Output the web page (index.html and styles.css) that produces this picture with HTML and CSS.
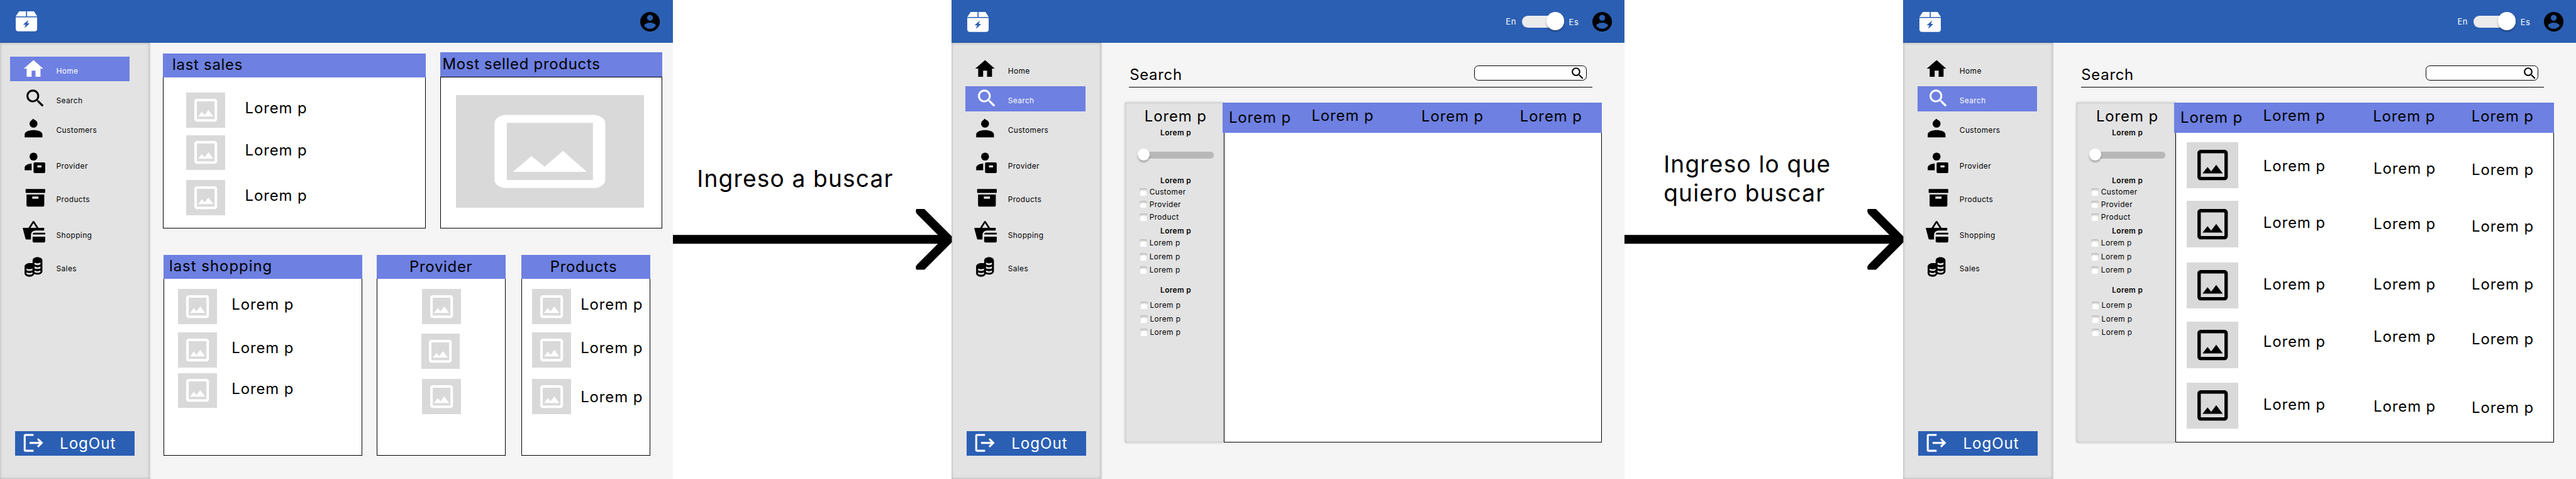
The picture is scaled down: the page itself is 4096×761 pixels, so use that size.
FILE: index.html
```html
<!DOCTYPE html>
<html lang="es">
<head>
<meta charset="utf-8">
<title>Flujo de búsqueda</title>
<link rel="stylesheet" href="styles.css">
</head>
<body>
<svg class="sprite" aria-hidden="true">
  <symbol id="logo" viewBox="34 24 46 43">
    <path d="M41.3 24H56v10.7H34zM58.3 24H73l7 10.7H58.3z"/>
    <path fill-rule="evenodd" d="M34 36.7h46V61q0 5.700-6 5.700H40q-6 0-6-5.700zM60 43.400l-9.500 8.200q-.6 1 .6 1h4.200l-2.300 6.200 1 .3 9-8.600q.6-1-.6-1h-4l2.600-6z"/>
  </symbol>
  <symbol id="user" viewBox="2 2 20 20"><path d="M12 2C6.480 2 2 6.480 2 12s4.480 10 10 10 10-4.480 10-10S17.520 2 12 2zm0 3c1.660 0 3 1.340 3 3s-1.340 3-3 3-3-1.340-3-3 1.340-3 3-3zm0 14.200c-2.500 0-4.710-1.280-6-3.220.03-1.990 4-3.080 6-3.080 1.990 0 5.970 1.090 6 3.080-1.290 1.940-3.500 3.220-6 3.220z"/></symbol>
  <symbol id="picture" viewBox="0 0 24 24"><path d="M19 5v14H5V5h14m0-2H5c-1.100 0-2 .9-2 2v14c0 1.100.9 2 2 2h14c1.100 0 2-.9 2-2V5c0-1.100-.9-2-2-2zm-4.860 8.860l-3 3.870L9 13.140 6 17h12l-3.860-5.140z"/></symbol>
  <symbol id="picture-wide" viewBox="0 0 24 24" preserveAspectRatio="none"><path d="M19 5v14H5V5h14m0-2H5c-1.100 0-2 .9-2 2v14c0 1.100.9 2 2 2h14c1.100 0 2-.9 2-2V5c0-1.100-.9-2-2-2zm-4.860 8.860l-3 3.870L9 13.140 6 17h12l-3.860-5.140z"/></symbol>
  <symbol id="lens" viewBox="0 0 24 24"><path d="M15.500 14h-.79l-.28-.27C15.410 12.590 16 11.110 16 9.500 16 5.910 13.090 3 9.500 3S3 5.910 3 9.500 5.910 16 9.500 16c1.610 0 3.090-.59 4.230-1.570l.27.28v.79l5 4.990L20.490 19l-4.990-5zm-6 0C7.010 14 5 11.990 5 9.500S7.010 5 9.500 5 14 7.010 14 9.500 11.990 14 9.500 14z"/></symbol>
  <symbol id="n-home" viewBox="46 121 54 53"><path d="M72 128.300 51 146.700h6.300V164h10.600v-13h8.400v13h10.600v-17.300h5.800z"/></symbol>
  <symbol id="n-search" viewBox="46 185 54 53"><path transform="translate(50.600 185.800) scale(2.100)" d="M15.500 14h-.79l-.28-.27C15.410 12.590 16 11.110 16 9.500 16 5.910 13.090 3 9.500 3S3 5.910 3 9.500 5.910 16 9.500 16c1.610 0 3.090-.59 4.230-1.570l.27.28v.79l5 4.990L20.490 19l-4.990-5zm-6 0C7.010 14 5 11.990 5 9.500S7.010 5 9.500 5 14 7.010 14 9.500 11.990 14 9.500 14z"/></symbol>
  <symbol id="n-customers" viewBox="46 248 54 53"><circle cx="72" cy="264.800" r="8.500"/><path d="M67 258.500 71.500 254l4 4.500zM53 294v-6c0-6 9-9.200 19-9.200s19 3.200 19 9.200v6z"/></symbol>
  <symbol id="n-provider" viewBox="46 324 54 53"><circle cx="72" cy="334.500" r="8.500"/><path d="M53 363.700v-5.500c0-5 7-8.200 15-8.800v14.300z"/><path fill-rule="evenodd" d="M74.500 347h20q2.500 0 2.500 2.500v17.700q0 2.500-2.500 2.500h-20q-2.500 0-2.500-2.500v-17.700q0-2.500 2.500-2.500zM80.300 353.300v4.400H89v-4.400z"/></symbol>
  <symbol id="n-products" viewBox="46 396 54 53"><rect x="55" y="404.300" width="42" height="8.500" rx="1.200"/><path fill-rule="evenodd" d="M57 416.300h38v23q0 2.700-2.700 2.700H59.700q-2.700 0-2.700-2.700zM69.300 420.700v4.600h13.200v-4.600z"/></symbol>
  <symbol id="n-shopping" viewBox="46 472 54 53"><path fill-rule="evenodd" d="M49.500 486.700h11.700l9.100-14q1.600-1.400 3.200 0l9.100 14h11.200q1.500 0 1.300 1.500l-.7 4.500H77q-10.500 0-10.500 10.500V511.700H57q-1.700 0-2.200-1.700l-5.700-21.500q-.3-1.800.4-1.800zM65.600 486.700h12.600l-6.300-9.900z"/><path d="M73 497.300h24v3.700H70q.5-3.700 3-3.700zM70 505.700h27v9.600q0 2.700-2.700 2.700H72.700q-2.700 0-2.700-2.700z"/></symbol>
  <symbol id="n-sales" viewBox="46 544 54 53"><path fill-rule="evenodd" d="M70 563V557.500C70 553 74.500 550 80.400 550S91 553 91 557.500V580c0 4.500-4.500 7.500-10.600 7.500-2.500 0-5-.5-7-1.500-1 3.500-5.200 6-10 6-6 0-10.600-3-10.600-7.500v-14c0-4.500 4.500-7.800 10.600-7.800 2.500 0 4.800.2 6.600.3z"/><g class="slot"><path d="M74 562q6.400 3 12.800 0v3.500q-6.400 3.200-12.800 0zM74 570.300q6.400 3 12.800 0v3.500q-6.400 3.200-12.800 0zM74 578.700q6.400 3 12.800 0v3.500q-6.400 3.200-12.800 0zM57 574.500q6.400 3 12.800 0v3.500q-6.400 3.200-12.800 0zM57 582.600q6.400 3 12.800 0v3.500q-6.400 3.200-12.800 0z"/></g></symbol>
  <symbol id="n-logout" viewBox="46 922 54 53"><path d="M72 928H55q-4 0-4 4v30q0 4 4 4h17v-4.200H55.200v-29.600H72zM82.500 937l-2.900 3 4.700 4.900H63.400v4.200h20.900l-4.700 4.900 2.900 3 10-10z"/></symbol>
  <symbol id="arrow" viewBox="0 0 597 130"><path d="M0 65H590M529.400 4.500 590 65l-60.600 60.500" fill="none" stroke="#000" stroke-width="19" stroke-linecap="round" stroke-linejoin="round"/></symbol>
</svg>

<div class="board">
  <section class="screen home">
    <header class="topbar">
      <svg class="logo"><use href="#logo"/></svg>
      <svg class="avatar"><use href="#user"/></svg>
    </header>
    <div class="body">
      <aside class="sidebar">
        <nav class="nav">
          <a class="item active"><svg><use href="#n-home"/></svg>Home</a>
          <a class="item"><svg><use href="#n-search"/></svg>Search</a>
          <a class="item"><svg><use href="#n-customers"/></svg>Customers</a>
          <a class="item"><svg><use href="#n-provider"/></svg>Provider</a>
          <a class="item"><svg><use href="#n-products"/></svg>Products</a>
          <a class="item"><svg><use href="#n-shopping"/></svg>Shopping</a>
          <a class="item"><svg><use href="#n-sales"/></svg>Sales</a>
        </nav>
        <button class="logout"><svg><use href="#n-logout"/></svg>LogOut</button>
      </aside>
      <main class="dashboard">
        <div class="cards cards-top">
          <article class="card sales">
            <h2>last sales</h2>
            <ul>
              <li><span class="thumb"><svg><use href="#picture"/></svg></span><span class="lorem">Lorem p</span></li>
              <li><span class="thumb"><svg><use href="#picture"/></svg></span><span class="lorem">Lorem p</span></li>
              <li><span class="thumb"><svg><use href="#picture"/></svg></span><span class="lorem">Lorem p</span></li>
            </ul>
          </article>
          <article class="card selled">
            <h2>Most selled products</h2>
            <div class="hero"><span class="hero-image"><svg><use href="#picture-wide"/></svg></span></div>
          </article>
        </div>
        <div class="cards cards-bottom">
          <article class="card shopping">
            <h2>last shopping</h2>
            <ul>
              <li><span class="thumb"><svg><use href="#picture"/></svg></span><span class="lorem">Lorem p</span></li>
              <li><span class="thumb"><svg><use href="#picture"/></svg></span><span class="lorem">Lorem p</span></li>
              <li><span class="thumb"><svg><use href="#picture"/></svg></span><span class="lorem">Lorem p</span></li>
            </ul>
          </article>
          <article class="card provider">
            <h2>Provider</h2>
            <ul>
              <li><span class="thumb"><svg><use href="#picture"/></svg></span></li>
              <li><span class="thumb"><svg><use href="#picture"/></svg></span></li>
              <li><span class="thumb"><svg><use href="#picture"/></svg></span></li>
            </ul>
          </article>
          <article class="card products">
            <h2>Products</h2>
            <ul>
              <li><span class="thumb"><svg><use href="#picture"/></svg></span><span class="lorem">Lorem p</span></li>
              <li><span class="thumb"><svg><use href="#picture"/></svg></span><span class="lorem">Lorem p</span></li>
              <li><span class="thumb"><svg><use href="#picture"/></svg></span><span class="lorem">Lorem p</span></li>
            </ul>
          </article>
        </div>
      </main>
    </div>
  </section>

  <div class="step step-one">
    <p>Ingreso a buscar</p>
    <svg><use href="#arrow"/></svg>
  </div>

  <section class="screen search">
    <header class="topbar">
      <svg class="logo"><use href="#logo"/></svg>
      <span class="lang">En</span>
      <span class="toggle"><span class="toggle-knob"></span></span>
      <span class="lang lang-es">Es</span>
      <svg class="avatar"><use href="#user"/></svg>
    </header>
    <div class="body">
      <aside class="sidebar">
        <nav class="nav">
          <a class="item"><svg><use href="#n-home"/></svg>Home</a>
          <a class="item active"><svg><use href="#n-search"/></svg>Search</a>
          <a class="item"><svg><use href="#n-customers"/></svg>Customers</a>
          <a class="item"><svg><use href="#n-provider"/></svg>Provider</a>
          <a class="item"><svg><use href="#n-products"/></svg>Products</a>
          <a class="item"><svg><use href="#n-shopping"/></svg>Shopping</a>
          <a class="item"><svg><use href="#n-sales"/></svg>Sales</a>
        </nav>
        <button class="logout"><svg><use href="#n-logout"/></svg>LogOut</button>
      </aside>
      <main class="finder">
        <div class="finder-head">
          <h1>Search</h1>
          <div class="searchbox"><svg><use href="#lens"/></svg></div>
        </div>
        <div class="workspace">
          <div class="filters">
            <h2>Lorem p</h2>
            <h3>Lorem p</h3>
            <div class="slider"><span class="slider-knob"></span></div>
            <h3>Lorem p</h3>
            <div class="checks types">
              <label><i></i>Customer</label>
              <label><i></i>Provider</label>
              <label><i></i>Product</label>
            </div>
            <h3>Lorem p</h3>
            <div class="checks">
              <label><i></i>Lorem p</label>
              <label><i></i>Lorem p</label>
              <label><i></i>Lorem p</label>
            </div>
            <h3>Lorem p</h3>
            <div class="checks">
              <label><i></i>Lorem p</label>
              <label><i></i>Lorem p</label>
              <label><i></i>Lorem p</label>
            </div>
          </div>
          <div class="table">
            <div class="row table-head">
              <span class="lorem">Lorem p</span><span class="lorem">Lorem p</span><span class="lorem">Lorem p</span><span class="lorem">Lorem p</span>
            </div>
            <div class="rows"></div>
          </div>
        </div>
      </main>
    </div>
  </section>

  <div class="step step-two">
    <p>Ingreso lo que<br>quiero buscar</p>
    <svg><use href="#arrow"/></svg>
  </div>

  <section class="screen search">
    <header class="topbar">
      <svg class="logo"><use href="#logo"/></svg>
      <span class="lang">En</span>
      <span class="toggle"><span class="toggle-knob"></span></span>
      <span class="lang lang-es">Es</span>
      <svg class="avatar"><use href="#user"/></svg>
    </header>
    <div class="body">
      <aside class="sidebar">
        <nav class="nav">
          <a class="item"><svg><use href="#n-home"/></svg>Home</a>
          <a class="item active"><svg><use href="#n-search"/></svg>Search</a>
          <a class="item"><svg><use href="#n-customers"/></svg>Customers</a>
          <a class="item"><svg><use href="#n-provider"/></svg>Provider</a>
          <a class="item"><svg><use href="#n-products"/></svg>Products</a>
          <a class="item"><svg><use href="#n-shopping"/></svg>Shopping</a>
          <a class="item"><svg><use href="#n-sales"/></svg>Sales</a>
        </nav>
        <button class="logout"><svg><use href="#n-logout"/></svg>LogOut</button>
      </aside>
      <main class="finder">
        <div class="finder-head">
          <h1>Search</h1>
          <div class="searchbox"><svg><use href="#lens"/></svg></div>
        </div>
        <div class="workspace">
          <div class="filters">
            <h2>Lorem p</h2>
            <h3>Lorem p</h3>
            <div class="slider"><span class="slider-knob"></span></div>
            <h3>Lorem p</h3>
            <div class="checks types">
              <label><i></i>Customer</label>
              <label><i></i>Provider</label>
              <label><i></i>Product</label>
            </div>
            <h3>Lorem p</h3>
            <div class="checks">
              <label><i></i>Lorem p</label>
              <label><i></i>Lorem p</label>
              <label><i></i>Lorem p</label>
            </div>
            <h3>Lorem p</h3>
            <div class="checks">
              <label><i></i>Lorem p</label>
              <label><i></i>Lorem p</label>
              <label><i></i>Lorem p</label>
            </div>
          </div>
          <div class="table">
            <div class="row table-head">
              <span class="lorem">Lorem p</span><span class="lorem">Lorem p</span><span class="lorem">Lorem p</span><span class="lorem">Lorem p</span>
            </div>
            <div class="rows">
              <div class="row"><span class="photo"><svg><use href="#picture"/></svg></span><span class="lorem">Lorem p</span><span class="lorem">Lorem p</span><span class="lorem">Lorem p</span></div>
              <div class="row"><span class="photo"><svg><use href="#picture"/></svg></span><span class="lorem">Lorem p</span><span class="lorem">Lorem p</span><span class="lorem">Lorem p</span></div>
              <div class="row"><span class="photo"><svg><use href="#picture"/></svg></span><span class="lorem">Lorem p</span><span class="lorem">Lorem p</span><span class="lorem">Lorem p</span></div>
              <div class="row"><span class="photo"><svg><use href="#picture"/></svg></span><span class="lorem">Lorem p</span><span class="lorem">Lorem p</span><span class="lorem">Lorem p</span></div>
              <div class="row"><span class="photo"><svg><use href="#picture"/></svg></span><span class="lorem">Lorem p</span><span class="lorem">Lorem p</span><span class="lorem">Lorem p</span></div>
            </div>
          </div>
        </div>
      </main>
    </div>
  </section>
</div>
</body>
</html>
```
FILE: styles.css
```css
:root {
  --blue: #2b5fb3;
  --violet: #6e80e1;
  --panel: #e3e3e3;
  --tile: #d9d9d9;
}
* { box-sizing: border-box; margin: 0; padding: 0; }
/* one rem is ten design units */
html { font-size: 7.4284px; }
body {
  width: 551.4rem;
  height: 102.4rem;
  overflow: hidden;
  background: #fff;
  color: #000;
  font-family: Inter, "Open Sans", sans-serif;
}
ul { list-style: none; }
svg { display: block; flex: none; fill: currentColor; overflow: visible; }
.sprite { display: none; }

.board { display: flex; height: 102.4rem; }
.screen {
  flex: none;
  width: 144rem;
  height: 102.4rem;
  overflow: hidden;
  background: #f5f5f5;
  --inset: 3rem;
}
.home { --inset: 2.1rem; }

/* top bar */
.topbar {
  display: flex;
  align-items: center;
  height: 9.2rem;
  padding: 0 2.7rem 0 3.4rem;
  background: var(--blue);
  color: #fff;
}
.logo { width: 4.6rem; height: 4.3rem; margin: .1rem auto 0 0; }
.home .logo { margin-top: -.1rem; }
.avatar { width: 4.2rem; height: 4.2rem; color: #000; }
.lang { width: 3.5rem; font-size: 1.75rem; line-height: 2.5rem; letter-spacing: .05em; }
.lang-es { width: 5rem; margin-top: .2rem; }
.toggle {
  display: flex;
  align-items: center;
  justify-content: flex-end;
  width: 9rem;
  height: 2.6rem;
  margin-right: 1rem;
  border-radius: 1.3rem;
  background: #ebebeb;
}
.toggle-knob {
  width: 3.8rem;
  height: 3.8rem;
  margin-top: -.2rem;
  flex: none;
  border-radius: 50%;
  background: #fff;
  box-shadow: 0 .3rem .4rem rgba(0, 0, 0, .3);
}

/* sidebar */
.body { display: flex; height: 93.2rem; }
.sidebar {
  display: flex;
  flex-direction: column;
  flex: none;
  width: 32rem;
  padding: 2.9rem 0 4.9rem;
  background: var(--panel);
  box-shadow: 0 0 .4rem rgba(0, 0, 0, .25), inset 0 0 .6rem rgba(0, 0, 0, .25);
}
.nav { display: flex; flex-direction: column; margin-left: var(--inset); }
.item {
  display: flex;
  gap: 2.05rem;
  width: 25.6rem;
  height: 5.3rem;
  padding-left: calc(4.6rem - var(--inset));
  font-size: 1.6rem;
  line-height: 6.15rem;
  letter-spacing: .035em;
}
.item svg { width: 5.4rem; height: 5.3rem; }
.item:nth-child(2) { margin-top: 1.1rem; }
.item:nth-child(3) { margin-top: 1rem; }
.item:nth-child(4), .item:nth-child(6) { margin-top: 2.3rem; }
.item:nth-child(5), .item:nth-child(7) { margin-top: 1.9rem; }
.active { background: var(--violet); color: #fff; }
.slot { fill: var(--panel); }
.logout {
  display: flex;
  gap: 2.8rem;
  width: 25.6rem;
  height: 5.3rem;
  margin: auto 0 0 3.2rem;
  padding-left: 1.4rem;
  border: 0;
  background: var(--blue);
  color: #fff;
  font: 400 3.25rem/5.4rem Inter, "Open Sans", sans-serif;
  letter-spacing: .04em;
  white-space: nowrap;
}
.logout svg { width: 5.4rem; height: 5.3rem; }

/* dashboard cards */
.lorem { font-size: 3.22rem; line-height: 3.1rem; letter-spacing: .038em; white-space: nowrap; }
.dashboard { padding-top: 2rem; }
.cards { display: flex; align-items: flex-end; }
.cards-top { padding-left: 2.8rem; gap: 3.1rem; }
.cards-bottom { margin-top: 5.6rem; padding-left: 3rem; }
.card { display: flex; flex-direction: column; }
.card h2 {
  height: 5.2rem;
  background: var(--violet);
  font-size: 3.22rem;
  font-weight: 400;
  line-height: 4.8rem;
  letter-spacing: .03em;
  white-space: nowrap;
}
.card ul, .hero { flex: 1; border: 1px solid #000; background: #fff; }
.card ul { border-top: 0; }
.card li { display: flex; align-items: center; height: 7.5rem; }
.card .lorem { margin-top: -.8rem; }
.thumb {
  display: flex;
  align-items: center;
  justify-content: center;
  width: 8.3rem;
  height: 7.5rem;
  background: var(--tile);
  color: #fff;
}
.thumb svg { width: 6.5rem; height: 6.5rem; }

.sales { width: 56.3rem; height: 37.5rem; }
.sales h2 { padding-left: 2.1rem; line-height: 4.8rem; }
.sales ul { padding: 3.2rem 0 0 4.9rem; }
.sales li { gap: 4.3rem; }
.sales li:nth-child(2) { margin: 1.6rem 0 2.1rem; }
.sales li:nth-child(2) .lorem { margin-top: -1.2rem; }

.selled { width: 47.5rem; height: 37.7rem; }
.selled h2 { padding-left: .5rem; line-height: 5.1rem; }
.hero { padding: 3.8rem 0 0 3.3rem; }
.hero-image {
  display: flex;
  align-items: center;
  justify-content: center;
  width: 40.2rem;
  height: 24.1rem;
  background: var(--tile);
  color: #fff;
}
.hero-image svg { width: 31.6rem; height: 20.9rem; }

.cards-bottom .card { height: 43rem; }
.shopping { width: 42.6rem; }
.card.shopping h2 { padding-left: 1.2rem; letter-spacing: .042em; }
.shopping ul { padding: 2.1rem 0 0 3rem; }
.shopping li { gap: 3.15rem; }
.shopping li:nth-child(2) { margin: 1.8rem 0 1.2rem; }
.provider { width: 27.6rem; margin-left: 3.05rem; }
.provider h2, .products h2 { line-height: 5.2rem; }
.provider h2 { padding-left: 7rem; }
.provider ul { padding: 2.1rem 0 0 9.55rem; }
.provider li:nth-child(2) { margin: 2.1rem 0 2.2rem -.2rem; }
.products { width: 27.6rem; margin-left: 3.4rem; }
.products h2 { padding-left: 6.1rem; }
.products ul { padding: 2.1rem 0 0 2.1rem; }
.products li { gap: 2.1rem; }
.products li:nth-child(2) { margin: 1.8rem 0 2.5rem; }
.products li:nth-child(3) .lorem { margin-top: 0; }

/* arrows between screens */
.step { z-index: 1; flex: none; width: 59.7rem; }
.step p { font-size: 5rem; line-height: 6.1rem; letter-spacing: .031em; white-space: nowrap; }
.step svg { width: 59.7rem; height: 13rem; }
.step-one { padding-top: 35.1rem; }
.step-one p { margin: 0 0 3.5rem 5.2rem; }
.step-two { padding-top: 32.1rem; }
.step-two p { margin: 0 0 .4rem 8.4rem; }

/* search screens */
.finder-head {
  display: flex;
  justify-content: space-between;
  width: 99.1rem;
  height: 4.7rem;
  margin: 4.8rem 0 0 6rem;
  padding: 0 1.2rem 0 .1rem;
  border-bottom: 1px solid #000;
}
.finder-head h1 { font-size: 3.22rem; font-weight: 400; line-height: 4.1rem; letter-spacing: .03em; }
.searchbox {
  display: flex;
  justify-content: flex-end;
  width: 24.1rem;
  height: 3.3rem;
  border: 1px solid #000;
  border-radius: .9rem;
  background: #fff;
}
.searchbox svg { width: 3.4rem; height: 3.4rem; margin-top: -.2rem; }
.workspace { display: flex; margin: 3.3rem 0 0 5.14rem; }
.filters {
  flex: none;
  width: 21.1rem;
  height: 72.6rem;
  padding-top: .85rem;
  background: var(--panel);
  box-shadow: 0 0 .5rem rgba(0, 0, 0, .25), inset 0 0 .5rem rgba(0, 0, 0, .2);
}
.filters h2 { padding-left: .5rem; font-size: 3.22rem; font-weight: 400; line-height: 4.1rem; height: 4rem; letter-spacing: .038em; text-align: center; }
.filters h3 { padding-left: .6rem; font-size: 1.6rem; font-weight: 600; line-height: 1.7rem; height: 1.6rem; letter-spacing: .03em; text-align: center; }
.filters h2 + h3 { margin-top: .7rem; }
.slider {
  display: flex;
  align-items: center;
  width: 16.3rem;
  height: 1.6rem;
  margin: 3.25rem 0 3.85rem 2.66rem;
  border-radius: .8rem;
  background: #b8b8b8;
}
.slider-knob {
  width: 2.6rem;
  height: 2.6rem;
  margin-top: -.2rem;
  flex: none;
  border-radius: 50%;
  background: #fff;
  box-shadow: 0 .4rem .4rem rgba(0, 0, 0, .25);
}
.checks { display: flex; flex-direction: column; padding: 1.05rem 0 2.7rem 3.1rem; }
.checks label { display: flex; gap: .5rem; height: 1.6rem; font-size: 1.6rem; line-height: 1.5rem; letter-spacing: .035em; }
.checks label:nth-child(2) { margin: 1.4rem 0 1.2rem; }
.checks:last-child { padding: 1.6rem 0 0 3.2rem; }
.types { padding: .85rem 0 1.25rem 3.1rem; }
.types label:nth-child(2) { margin-top: 1rem; }
.checks i {
  width: 1.6rem;
  height: 1.6rem;
  border-radius: .3rem;
  background: #fff;
  box-shadow: inset 0 .4rem .4rem rgba(0, 0, 0, .25);
}

/* results table */
.table { z-index: 1; display: flex; flex-direction: column; width: 81.2rem; height: 72.6rem; margin-left: -.2rem; }
.row { display: grid; grid-template-columns: 17.7rem 23.5rem 21.1rem auto; align-items: start; }
.table-head { height: 6.4rem; padding-left: 1.3rem; background: var(--violet); }
.table-head .lorem { margin-top: 1.15rem; }
.table-head .lorem:nth-child(1) { margin-top: 1.55rem; }
.table-head .lorem:nth-child(3) { margin-top: 1.35rem; }
.table-head .lorem:nth-child(4) { margin-top: 1.25rem; }
.rows { flex: 1; margin-left: .2rem; padding: 2rem 0 0 2.3rem; border: 1px solid #000; border-top: 0; background: #fff; }
.rows .row { height: 9.9rem; margin-bottom: 2.7rem; grid-template-columns: 16.4rem 23.6rem 21rem auto; }
.rows .row:nth-child(2) { margin-bottom: 3.2rem; }
.rows .row:nth-child(3) { margin-bottom: 2.8rem; }
.rows .row:nth-child(4) { margin-bottom: 3.1rem; }
.photo {
  display: flex;
  align-items: center;
  justify-content: center;
  width: 11rem;
  height: 9.9rem;
  background: var(--tile);
}
.photo svg { width: 8.67rem; height: 8.67rem; }
.rows .lorem { margin-top: 3.5rem; }
.rows .row:nth-child(1) .lorem:nth-child(3) { margin-top: 4.1rem; }
.rows .row:nth-child(1) .lorem:nth-child(4) { margin-top: 4.4rem; }
.rows .row:nth-child(2) .lorem:nth-child(2) { margin-top: 3.1rem; }
.rows .row:nth-child(2) .lorem:nth-child(3) { margin-top: 3.3rem; }
.rows .row:nth-child(2) .lorem:nth-child(4) { margin-top: 3.8rem; }
.rows .row:nth-child(3) .lorem { margin-top: 3.1rem; }
.rows .row:nth-child(4) .lorem:nth-child(2) { margin-top: 2.7rem; }
.rows .row:nth-child(4) .lorem:nth-child(3) { margin-top: 1.6rem; }
.rows .row:nth-child(4) .lorem:nth-child(4) { margin-top: 2.2rem; }
.rows .row:nth-child(5) .lorem:nth-child(2) { margin-top: 3.1rem; }
.rows .row:nth-child(5) .lorem:nth-child(4) { margin-top: 3.9rem; }
```
